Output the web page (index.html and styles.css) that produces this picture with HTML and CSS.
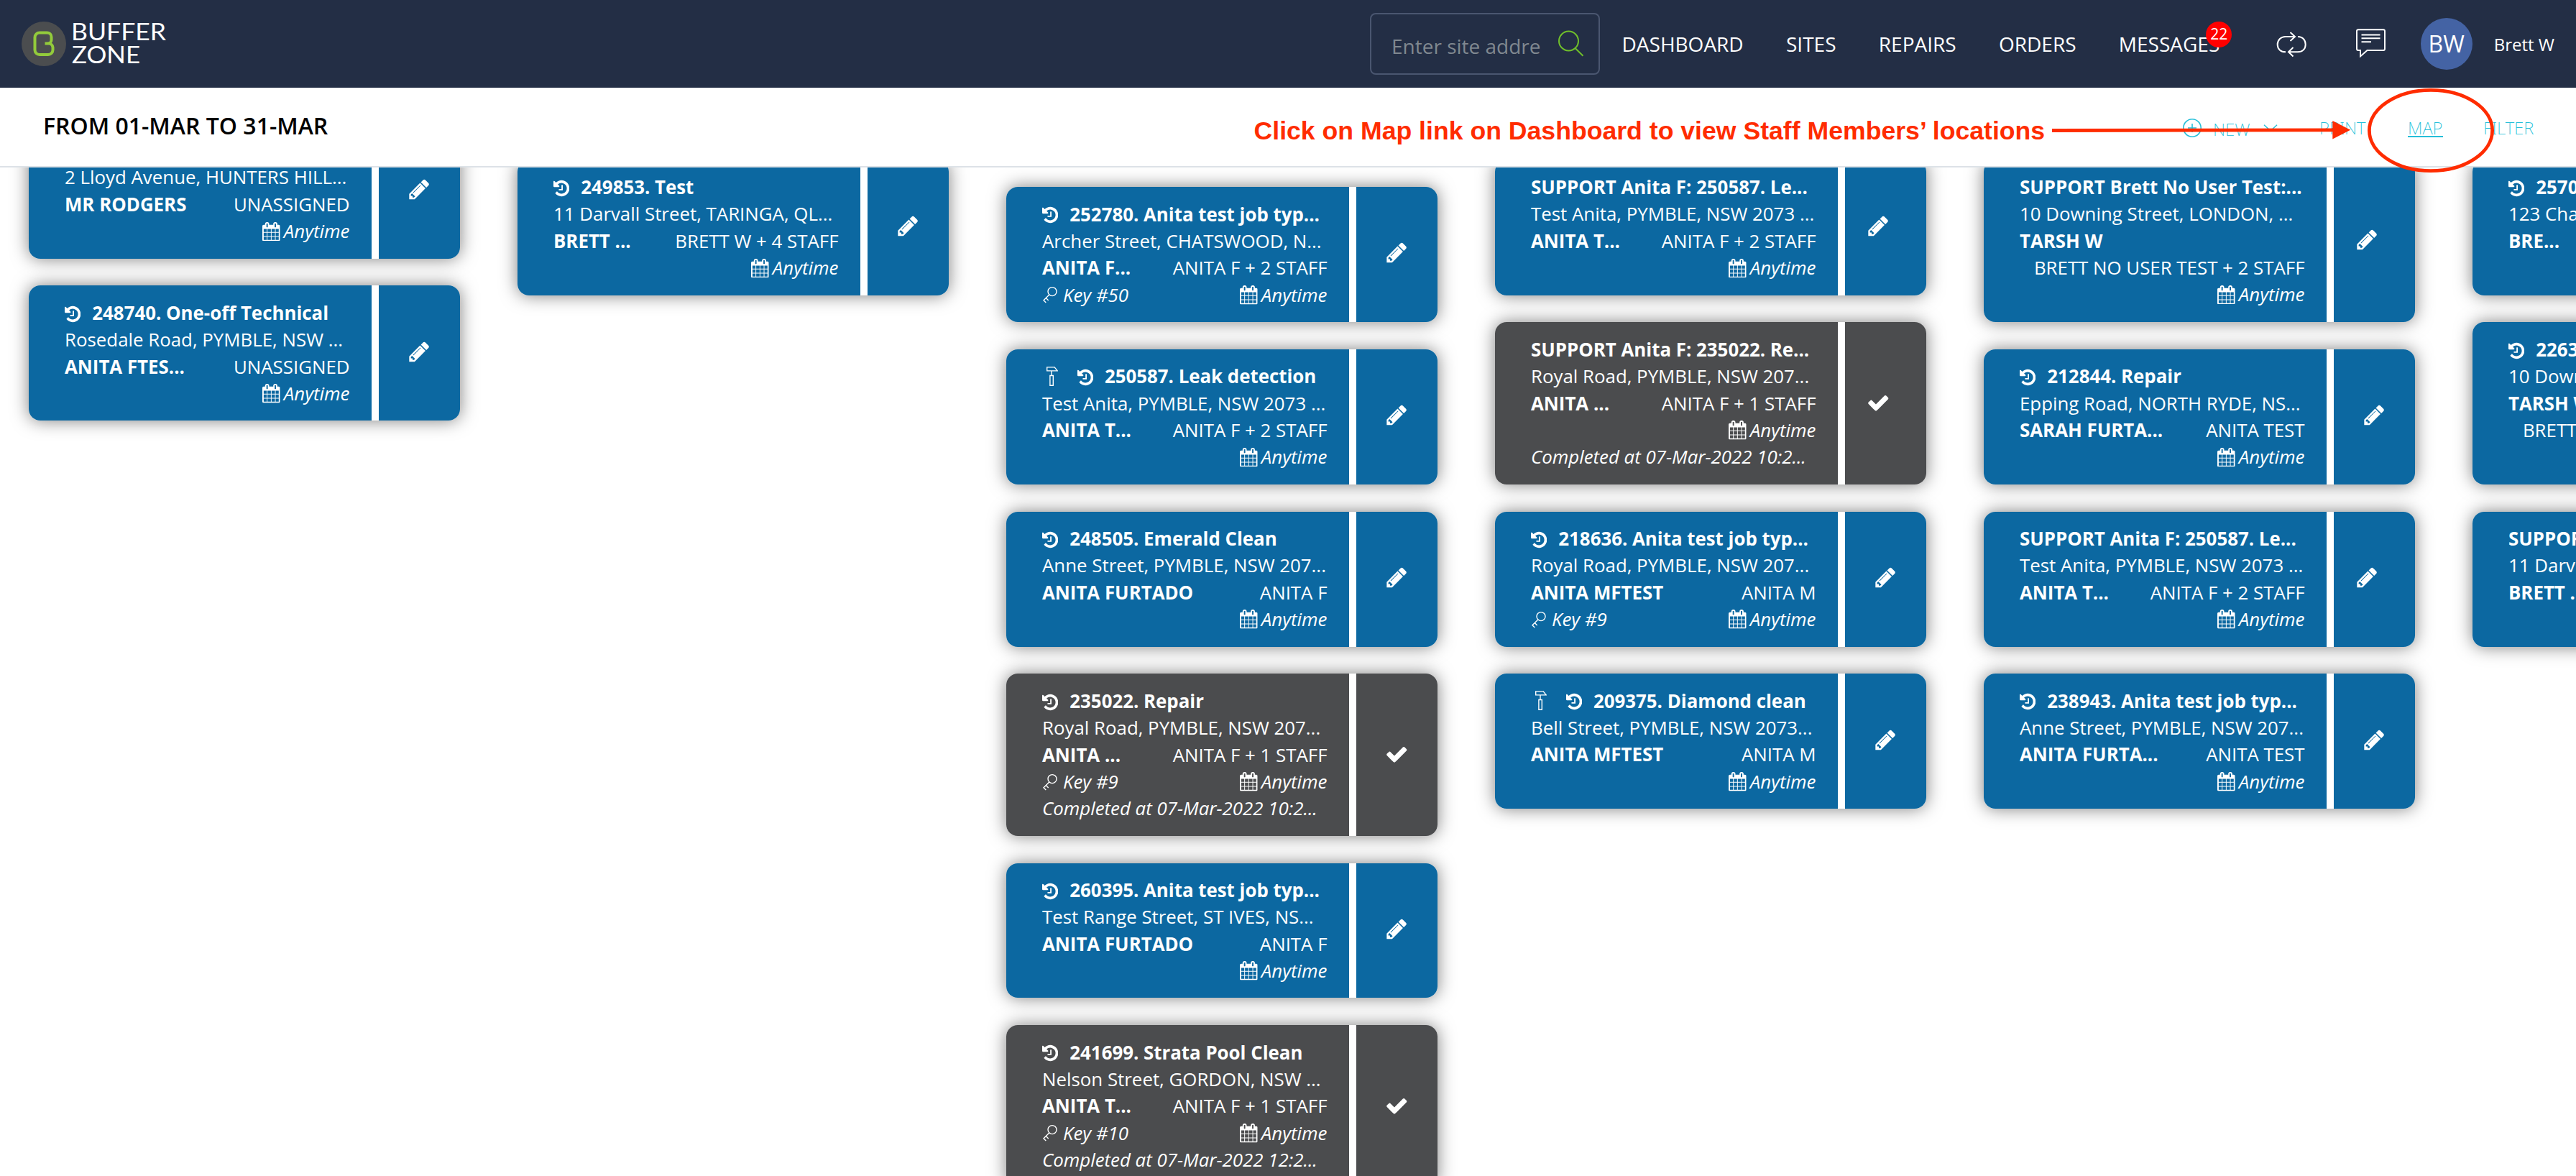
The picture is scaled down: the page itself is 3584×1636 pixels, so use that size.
FILE: index.html
```html
<!DOCTYPE html>
<html lang="en">
<head>
<meta charset="utf-8">
<title>Buffer Zone Dashboard</title>
<link rel="stylesheet" href="styles.css">
</head>
<body>
<svg class="sprite" aria-hidden="true">
  <symbol id="history" viewBox="128 0 1536 1792"><path d="M1664 896q0 156-61 298t-164 245-245 164-298 61q-172 0-327-72.5t-264-204.5q-7-10-6.500-22.500t8.500-20.500l137-138q10-9 25-9 16 2 23 12 73 95 179 147t225 52q104 0 198.500-40.500t163.500-109.500 109.500-163.500 40.500-198.500-40.500-198.500-109.500-163.500-163.500-109.500-198.500-40.500q-98 0-188 35.500t-160 101.500l137 138q31 30 14 69-17 40-59 40h-448q-26 0-45-19t-19-45v-448q0-42 40-59 39-17 69 14l130 129q107-101 244.500-156.500t284.500-55.500q156 0 298 61t245 164 164 245 61 298zm-640-288v448q0 14-9 23t-23 9h-320q-14 0-23-9t-9-23v-64q0-14 9-23t23-9h224v-352q0-14 9-23t23-9h64q14 0 23 9t9 23z"/></symbol>
  <symbol id="pencil" viewBox="0 0 1792 1792"><path d="M491 1536l91-91-235-235-91 91v107h128v128h107zm523-928q0-22-22-22-10 0-17 7l-542 542q-7 7-7 17 0 22 22 22 10 0 17-7l542-542q7-7 7-17zm-54-192l416 416-832 832h-416v-416zm683 96q0 53-37 90l-166 166-416-416 166-165q36-38 90-38 53 0 91 38l235 234q37 39 37 91z"/></symbol>
  <symbol id="check" viewBox="0 0 1792 1792"><path d="M1671 566q0 40-28 68l-724 724-136 136q-28 28-68 28t-68-28l-136-136-362-362q-28-28-28-68t28-68l136-136q28-28 68-28t68 28l294 295 656-657q28-28 68-28t68 28l136 136q28 28 28 68z"/></symbol>
  <symbol id="calendar" viewBox="64 0 1664 1792"><path d="M192 1664h288v-288h-288v288zm352 0h320v-288h-320v288zm-352-352h288v-320h-288v320zm352 0h320v-320h-320v320zm-352-384h288v-288h-288v288zm736 736h320v-288h-320v288zm-384-736h320v-288h-320v288zm768 736h288v-288h-288v288zm-384-352h320v-320h-320v320zm-352-864v-288q0-13-9.500-22.500t-22.500-9.500h-64q-13 0-22.500 9.500t-9.500 22.500v288q0 13 9.500 22.500t22.500 9.500h64q13 0 22.500-9.500t9.500-22.500zm736 864h288v-320h-288v320zm-384-384h320v-288h-320v288zm384 0h288v-288h-288v288zm32-480v-288q0-13-9.500-22.500t-22.500-9.500h-64q-13 0-22.500 9.500t-9.500 22.500v288q0 13 9.500 22.500t22.500 9.500h64q13 0 22.500-9.500t9.500-22.500zm384-64v1280q0 52-38 90t-90 38h-1408q-52 0-90-38t-38-90v-1280q0-52 38-90t90-38h128v-96q0-66 47-113t113-47h64q66 0 113 47t47 113v96h384v-96q0-66 47-113t113-47h64q66 0 113 47t47 113v96h128q52 0 90 38t38 90z"/></symbol>
  <symbol id="key" viewBox="0 0 22 26"><g fill="none" stroke="currentColor" stroke-width="1.400"><circle cx="14" cy="8.600" r="6"/><path d="M9.800 12.900L2 20.800l3.300 3.200M5.300 17.600l3.400 3.300"/></g></symbol>
  <symbol id="hammer" viewBox="0 0 16 27"><g fill="none" stroke="currentColor" stroke-width="1.400"><path d="M.7.900h10.500l4 5H.7zM7 6v6M4.900 12.500h4.400v13.700H4.900z"/></g></symbol>
</svg>

<header class="topbar">
  <svg class="logo" width="206" height="72" viewBox="0 0 206 72">
    <circle cx="31" cy="36" r="31" fill="#4b4d4f"/>
    <path d="M32.500 35.500h5.500a6 6 0 0 1 5.500 5.500v3.500a6.500 6.500 0 0 1-6.500 6.500H25a6.500 6.500 0 0 1-6.500-6.500V27a6.500 6.500 0 0 1 6.500-6.500h10.500a6 6 0 0 1 6 6v4a5 5 0 0 1-5 5" fill="none" stroke="#93cb3b" stroke-width="4"/>
    <text x="69" y="31" textLength="132" lengthAdjust="spacingAndGlyphs">BUFFER</text>
    <text x="70" y="63" textLength="95" lengthAdjust="spacingAndGlyphs">ZONE</text>
  </svg>
  <div class="search">
    <span class="search-text">Enter site addre</span>
    <svg width="38" height="38" viewBox="0 0 38 38"><g fill="none" stroke="#70bf2b" stroke-width="2"><circle cx="15.500" cy="15" r="13.500"/><path d="M24.500 25l11 10.700"/></g></svg>
  </div>
  <nav class="nav">
    <a>DASHBOARD</a><a>SITES</a><a>REPAIRS</a><a>ORDERS</a><a class="messages">MESSAGES<span class="badge">22</span></a>
  </nav>
  <svg class="refresh" width="44" height="38" viewBox="26 22 44 38"><path d="M40 52.300C33 52.300 28.700 48 28.700 42S33 31 40 31h13M46.500 25l6.500 6-6.500 6M57 31c7 0 10.700 5 10.700 11S63.500 52.300 57 52.300H44M50.500 46L44 52.300l6.500 6.200" fill="none" stroke="#fff" stroke-width="2"/></svg>
  <svg class="chat" width="42" height="42" viewBox="138 19 42 42"><path d="M141 21.300h35a2 2 0 0 1 2 2V48a2 2 0 0 1-2 2h-22.500l-9.500 8.500V50h-3a2 2 0 0 1-2-2V23.300a2 2 0 0 1 2-2zM145.500 28.500h26M145.500 33.300h26M145.500 38.300H159" fill="none" stroke="#fff" stroke-width="1.900"/></svg>
  <span class="avatar">BW</span>
  <span class="username">Brett W</span>
</header>

<section class="subbar">
  <h1 class="range">FROM 01-MAR TO 31-MAR</h1>
  <div class="actions">
    <a class="new">
      <svg width="26" height="26" viewBox="0 0 26 26"><g fill="none" stroke="#25bfd9" stroke-width="1.600"><circle cx="13" cy="13" r="12.200"/><path d="M13 7v12M7 13h12"/></g></svg>
      <span class="new-text">NEW</span>
      <svg width="20" height="10" viewBox="0 0 20 10"><path d="M1 .7l9 8.300 9-8.300" fill="none" stroke="#25bfd9" stroke-width="1.400"/></svg>
    </a>
    <a class="print">PRINT</a>
    <a class="map"><span>MAP</span></a>
    <a class="filter">FILTER</a>
  </div>
</section>

<main class="board">
  <div class="column start-a">
    <article class="card">
      <div class="info"><p></p><p>2 Lloyd Avenue, HUNTERS HILL...</p><p class="split"><b>MR RODGERS</b><span>UNASSIGNED</span></p><p class="when"><span class="any"><svg><use href="#calendar"/></svg>Anytime</span></p></div>
      <div class="side"><svg><use href="#pencil"/></svg></div>
    </article>
    <article class="card">
      <div class="info"><p class="job"><svg class="hist"><use href="#history"/></svg>248740. One-off Technical</p><p>Rosedale Road, PYMBLE, NSW ...</p><p class="split"><b>ANITA FTES...</b><span>UNASSIGNED</span></p><p class="when"><span class="any"><svg><use href="#calendar"/></svg>Anytime</span></p></div>
      <div class="side"><svg><use href="#pencil"/></svg></div>
    </article>
  </div>

  <div class="column start-b">
    <article class="card">
      <div class="info"><p class="job"><svg class="hist"><use href="#history"/></svg>249853. Test</p><p>11 Darvall Street, TARINGA, QL...</p><p class="split"><b>BRETT ...</b><span>BRETT W + 4 STAFF</span></p><p class="when"><span class="any"><svg><use href="#calendar"/></svg>Anytime</span></p></div>
      <div class="side"><svg><use href="#pencil"/></svg></div>
    </article>
  </div>

  <div class="column start-c">
    <article class="card">
      <div class="info"><p class="job"><svg class="hist"><use href="#history"/></svg>252780. Anita test job typ...</p><p>Archer Street, CHATSWOOD, N...</p><p class="split"><b>ANITA F...</b><span>ANITA F + 2 STAFF</span></p><p class="when"><span class="key"><svg><use href="#key"/></svg>Key #50</span><span class="any"><svg><use href="#calendar"/></svg>Anytime</span></p></div>
      <div class="side"><svg><use href="#pencil"/></svg></div>
    </article>
    <article class="card">
      <div class="info"><p class="job"><svg class="ham"><use href="#hammer"/></svg><svg class="hist"><use href="#history"/></svg>250587. Leak detection</p><p>Test Anita, PYMBLE, NSW 2073 ...</p><p class="split"><b>ANITA T...</b><span>ANITA F + 2 STAFF</span></p><p class="when"><span class="any"><svg><use href="#calendar"/></svg>Anytime</span></p></div>
      <div class="side"><svg><use href="#pencil"/></svg></div>
    </article>
    <article class="card">
      <div class="info"><p class="job"><svg class="hist"><use href="#history"/></svg>248505. Emerald Clean</p><p>Anne Street, PYMBLE, NSW 207...</p><p class="split"><b>ANITA FURTADO</b><span>ANITA F</span></p><p class="when"><span class="any"><svg><use href="#calendar"/></svg>Anytime</span></p></div>
      <div class="side"><svg><use href="#pencil"/></svg></div>
    </article>
    <article class="card done">
      <div class="info"><p class="job"><svg class="hist"><use href="#history"/></svg>235022. Repair</p><p>Royal Road, PYMBLE, NSW 207...</p><p class="split"><b>ANITA ...</b><span>ANITA F + 1 STAFF</span></p><p class="when"><span class="key"><svg><use href="#key"/></svg>Key #9</span><span class="any"><svg><use href="#calendar"/></svg>Anytime</span></p><p class="completed">Completed at 07-Mar-2022 10:2...</p></div>
      <div class="side"><svg><use href="#check"/></svg></div>
    </article>
    <article class="card">
      <div class="info"><p class="job"><svg class="hist"><use href="#history"/></svg>260395. Anita test job typ...</p><p>Test Range Street, ST IVES, NS...</p><p class="split"><b>ANITA FURTADO</b><span>ANITA F</span></p><p class="when"><span class="any"><svg><use href="#calendar"/></svg>Anytime</span></p></div>
      <div class="side"><svg><use href="#pencil"/></svg></div>
    </article>
    <article class="card done">
      <div class="info"><p class="job"><svg class="hist"><use href="#history"/></svg>241699. Strata Pool Clean</p><p>Nelson Street, GORDON, NSW ...</p><p class="split"><b>ANITA T...</b><span>ANITA F + 1 STAFF</span></p><p class="when"><span class="key"><svg><use href="#key"/></svg>Key #10</span><span class="any"><svg><use href="#calendar"/></svg>Anytime</span></p><p class="completed">Completed at 07-Mar-2022 12:2...</p></div>
      <div class="side"><svg><use href="#check"/></svg></div>
    </article>
  </div>

  <div class="column start-b">
    <article class="card support">
      <div class="info"><p class="job">SUPPORT Anita F: 250587. Le...</p><p>Test Anita, PYMBLE, NSW 2073 ...</p><p class="split"><b>ANITA T...</b><span>ANITA F + 2 STAFF</span></p><p class="when"><span class="any"><svg><use href="#calendar"/></svg>Anytime</span></p></div>
      <div class="side"><svg><use href="#pencil"/></svg></div>
    </article>
    <article class="card done support">
      <div class="info"><p class="job">SUPPORT Anita F: 235022. Re...</p><p>Royal Road, PYMBLE, NSW 207...</p><p class="split"><b>ANITA ...</b><span>ANITA F + 1 STAFF</span></p><p class="when"><span class="any"><svg><use href="#calendar"/></svg>Anytime</span></p><p class="completed">Completed at 07-Mar-2022 10:2...</p></div>
      <div class="side"><svg><use href="#check"/></svg></div>
    </article>
    <article class="card">
      <div class="info"><p class="job"><svg class="hist"><use href="#history"/></svg>218636. Anita test job typ...</p><p>Royal Road, PYMBLE, NSW 207...</p><p class="split"><b>ANITA MFTEST</b><span>ANITA M</span></p><p class="when"><span class="key"><svg><use href="#key"/></svg>Key #9</span><span class="any"><svg><use href="#calendar"/></svg>Anytime</span></p></div>
      <div class="side"><svg><use href="#pencil"/></svg></div>
    </article>
    <article class="card">
      <div class="info"><p class="job"><svg class="ham"><use href="#hammer"/></svg><svg class="hist"><use href="#history"/></svg>209375. Diamond clean</p><p>Bell Street, PYMBLE, NSW 2073...</p><p class="split"><b>ANITA MFTEST</b><span>ANITA M</span></p><p class="when"><span class="any"><svg><use href="#calendar"/></svg>Anytime</span></p></div>
      <div class="side"><svg><use href="#pencil"/></svg></div>
    </article>
  </div>

  <div class="column start-b">
    <article class="card support">
      <div class="info"><p class="job">SUPPORT Brett No User Test:...</p><p>10 Downing Street, LONDON, ...</p><p class="split"><b>TARSH W</b></p><p class="right">BRETT NO USER TEST + 2 STAFF</p><p class="when"><span class="any"><svg><use href="#calendar"/></svg>Anytime</span></p></div>
      <div class="side"><svg><use href="#pencil"/></svg></div>
    </article>
    <article class="card">
      <div class="info"><p class="job"><svg class="hist"><use href="#history"/></svg>212844. Repair</p><p>Epping Road, NORTH RYDE, NS...</p><p class="split"><b>SARAH FURTA...</b><span>ANITA TEST</span></p><p class="when"><span class="any"><svg><use href="#calendar"/></svg>Anytime</span></p></div>
      <div class="side"><svg><use href="#pencil"/></svg></div>
    </article>
    <article class="card support">
      <div class="info"><p class="job">SUPPORT Anita F: 250587. Le...</p><p>Test Anita, PYMBLE, NSW 2073 ...</p><p class="split"><b>ANITA T...</b><span>ANITA F + 2 STAFF</span></p><p class="when"><span class="any"><svg><use href="#calendar"/></svg>Anytime</span></p></div>
      <div class="side"><svg><use href="#pencil"/></svg></div>
    </article>
    <article class="card">
      <div class="info"><p class="job"><svg class="hist"><use href="#history"/></svg>238943. Anita test job typ...</p><p>Anne Street, PYMBLE, NSW 207...</p><p class="split"><b>ANITA FURTA...</b><span>ANITA TEST</span></p><p class="when"><span class="any"><svg><use href="#calendar"/></svg>Anytime</span></p></div>
      <div class="side"><svg><use href="#pencil"/></svg></div>
    </article>
  </div>

  <div class="column start-b">
    <article class="card">
      <div class="info"><p class="job"><svg class="hist"><use href="#history"/></svg>2570</p><p>123 Cha</p><p class="split"><b>BRE...</b></p><p></p></div>
      <div class="side"></div>
    </article>
    <article class="card">
      <div class="info"><p class="job"><svg class="hist"><use href="#history"/></svg>2263</p><p>10 Down</p><p class="split"><b>TARSH W</b></p><p class="right">BRETT NO USER TEST + 2 STAFF</p><p></p></div>
      <div class="side"></div>
    </article>
    <article class="card">
      <div class="info"><p class="job">SUPPOR</p><p>11 Darv</p><p class="split"><b>BRETT ...</b></p><p></p></div>
      <div class="side"></div>
    </article>
  </div>
</main>

<div class="note">Click on Map link on Dashboard to view Staff Members’ locations</div>
<svg class="note-arrow" width="630" height="122" viewBox="2850 121 630 122">
  <path d="M2855 181.500L3247 180.800" stroke="#ff2c00" stroke-width="4.800"/>
  <path d="M3245.300 168l24.900 12.700-24.900 12.700z" fill="#ff2c00"/>
  <ellipse cx="3382" cy="181.500" rx="85.600" ry="56.200" fill="none" stroke="#ff2c00" stroke-width="4.800"/>
</svg>
</body>
</html>
```
FILE: styles.css
```css
* { box-sizing: border-box; }
html, body { margin: 0; height: 1636px; overflow: hidden; }
body {
  position: relative;
  display: flex;
  flex-direction: column;
  background: #fff;
  font-family: "Open Sans", "Noto Sans", sans-serif;
  color: #fff;
}
svg { display: block; flex: none; }
.sprite { position: absolute; width: 0; height: 0; }

/* top bar */
.topbar {
  flex: none;
  height: 122px;
  display: flex;
  align-items: center;
  padding: 0 30px;
  background: #232e45;
}
.logo text { font: 400 32px Lato, sans-serif; fill: #fff; }
.search {
  display: flex;
  align-items: center;
  width: 320px;
  height: 86px;
  margin-left: 1670px;
  padding-left: 28px;
  border: 2px solid #4a5670;
  border-radius: 8px;
}
.search-text { width: 231px; padding-top: 6px; font-size: 28px; color: #808890; white-space: nowrap; }
.nav { display: flex; gap: 59.300px; margin-left: 30.500px; font-size: 28px; }
.messages { position: relative; }
.badge {
  position: absolute;
  top: -12px;
  right: -17px;
  width: 36px;
  height: 36px;
  border-radius: 50%;
  background: #f00;
  font-size: 21px;
  line-height: 35px;
  text-align: center;
}
.refresh { margin-left: auto; }
.chat { margin: -2px 0 0 68px; }
.avatar {
  width: 72px;
  height: 72px;
  margin-left: 48px;
  border-radius: 50%;
  background: #4463a4;
  font-size: 32px;
  line-height: 72px;
  text-align: center;
}
.username { margin-left: 30px; font-size: 24px; }

/* range and actions */
.subbar {
  flex: none;
  height: 111px;
  display: flex;
  justify-content: space-between;
  align-items: center;
  padding-left: 60px;
  border-bottom: 2px solid #dde2e7;
  background: #fff;
}
.range { margin: 0; padding-bottom: 4px; font-size: 32px; font-weight: 600; color: #000; }
.actions {
  display: flex;
  align-items: center;
  width: 547px;
  padding-top: 2px;
  font: 200 24px/32px "Noto Sans", "Open Sans", sans-serif;
  color: #25bfd9;
}
.new { display: flex; align-items: center; width: 190px; }
.new-text { width: 70px; margin-left: 16px; padding-top: 4px; }
.print { width: 123px; }
.map { width: 105px; }
.map span { display: inline-block; height: 29px; border-bottom: 2px solid #25bfd9; }

/* job board */
.board {
  flex: 1;
  min-height: 0;
  display: flex;
  align-items: flex-start;
  gap: 80px;
  padding-left: 40px;
  overflow: hidden;
  font-size: 25.850px;
}
.column { flex: none; width: 600px; display: flex; flex-direction: column; gap: 37.800px; }
.start-a { margin-top: -61.300px; }
.start-b { margin-top: -10.300px; }
.start-c { margin-top: 27.200px; }
.card {
  display: grid;
  grid-template-columns: 477px 113px;
  gap: 10px;
  border-radius: 16px;
  overflow: hidden;
  background: #fff;
  box-shadow: 0 0 24px rgba(0, 0, 0, .5);
}
.info, .side { background: #0c68a1; }
.done .info, .done .side { background: #4b4c4e; }
.info { padding: 19.400px 30.500px 19.200px 50px; }
.info p { display: flex; height: 37.350px; margin: 0; line-height: 37.350px; white-space: nowrap; }
.job, .info b { font-weight: 700; }
.job { align-items: center; }
.hist { width: 22.300px; height: 26px; margin: 2px 16px 0 0; fill: currentColor; }
.ham { width: 16px; height: 27px; margin: -2px 26.600px 0 6px; }
.split { justify-content: space-between; }
.info .right { justify-content: flex-end; }
.when, .completed { font-style: italic; }
.any, .key { display: flex; align-items: center; }
.any { margin-left: auto; }
.any svg { width: 24.700px; height: 26.600px; margin-right: 5px; fill: currentColor; }
.key svg { width: 22px; height: 26px; margin-right: 7px; }
.side { display: flex; align-items: center; justify-content: center; padding-bottom: 5px; }
.side svg { width: 32.500px; height: 32.500px; fill: currentColor; }
.done .side { padding-bottom: 2px; }
.support .side { padding-right: 20px; }

/* annotation over the page */
.note {
  position: absolute;
  left: 1744.500px;
  top: 161.500px;
  font: bold 35.640px/40px "Liberation Sans", Arial, sans-serif;
  color: #ff2c00;
  white-space: nowrap;
}
.note-arrow { position: absolute; left: 2850px; top: 121px; }
```
